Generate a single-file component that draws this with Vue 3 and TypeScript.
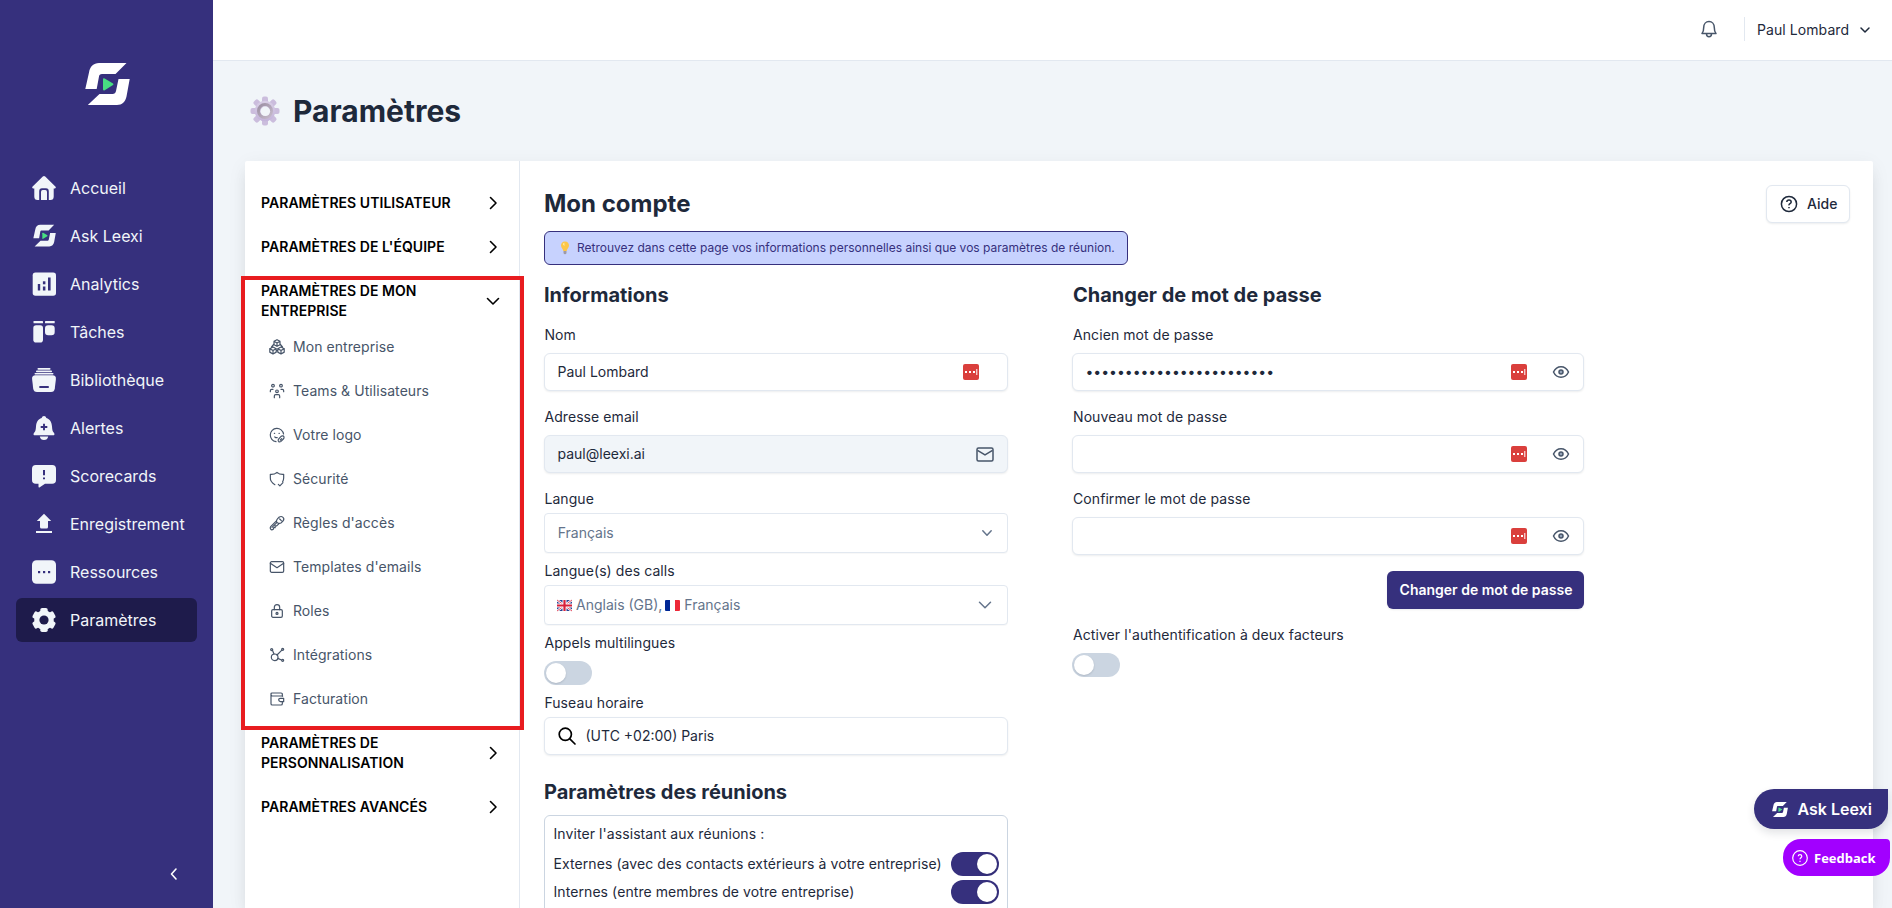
<script setup lang="ts">
import { ref } from 'vue'

interface NavItem { label: string; icon: string; active?: boolean }
interface SubItem { label: string; icon: string }
interface Section { lines: string[]; open?: boolean; items?: SubItem[] }

const mark = (play: string) =>
  `<path fill="currentColor" d="M4 9.5C5 3.5 8.500 0 14 0H41.500L30.500 11H17C15 11 14.200 12 14 13.500L11.700 26H0.300Z"/>` +
  `<path fill="currentColor" d="M33.500 16H44.700L41.500 33.500C40.500 38.500 37 42 32 42H2.800L14.500 31H27.500C29.500 31 30.600 30 31 28Z"/>` +
  `<path fill="${play}" d="M18 16.500Q18 14.700 19.700 15.600L28 20.400Q29 21.200 28 22L19.700 27.200Q18 28 18 26.300Z"/>`

const leexi = mark('#48df82')
const bg = '#36307d'
const tooth = [0, 60, 120, 180, 240, 300]
  .map(a => `<rect x="8.300" y="0" width="7.400" height="7" rx="1.800" transform="rotate(${a} 12 12)"/>`)
  .join('')

const icons: Record<string, string> = {
  home: `<path fill="currentColor" d="M10.800.6Q12-.5 13.200.6L23.600 10.700Q24.400 12 23 12.500H21.700V20.500Q21.700 24 18.500 24H16.800V15.600Q16.800 12.300 14 12.300H10Q7.200 12.300 7.200 15.600V24H5.500Q2.300 24 2.300 20.500V12.500H1Q-.4 12 .4 10.700Z"/><path fill="currentColor" d="M9 24V15.800Q9 14 10.700 14H13.300Q15 14 15 15.800V24Z"/>`,
  leexi: `<g transform="translate(1.200 .8) scale(.505 .515)">${leexi}</g>`,
  analytics: `<rect x=".7" y=".5" width="23.300" height="23.300" rx="2.800" fill="currentColor"/><g fill="${bg}"><rect x="5.800" y="12" width="2.400" height="6.500"/><rect x="10.900" y="9.300" width="2.500" height="3"/><rect x="10.900" y="14.500" width="2.500" height="4"/><rect x="16" y="5.500" width="2.600" height="13"/></g>`,
  tasks: `<g fill="currentColor"><rect x="1.500" y="1" width="9.500" height="2.300" rx=".6"/><rect x="13" y="1" width="9.700" height="2.300" rx=".6"/><rect x="1.300" y="5.300" width="9.700" height="17.200" rx="2.800"/><rect x="13" y="5.300" width="9.700" height="10" rx="3.200"/></g>`,
  library: `<g fill="currentColor"><rect x="5.500" y="0" width="13" height="1.700" rx=".8"/><rect x="4" y="2.500" width="16" height="1.700" rx=".8"/><rect x="2.500" y="5" width="19" height="1.500" rx=".7"/><path d="M3.500 7.300H20.500Q24.200 7.300 23.900 11L22.800 20.500Q22.300 24 19 24H5Q1.700 24 1.200 20.500L.1 11Q-.2 7.300 3.500 7.300Z"/></g><rect x="7.300" y="18" width="9.500" height="2" rx=".5" fill="${bg}"/>`,
  alert: `<path fill="currentColor" d="M12 0C13.200 0 14 .8 14.300 2C18 3.200 19.700 6.300 20 10.500C20.200 13.500 20.500 15.300 21.700 16.500C22.900 17.700 22.600 19.200 21.700 19.200H2.300C1.400 19.200 1.100 17.700 2.300 16.500C3.500 15.300 3.800 13.500 4 10.500C4.300 6.300 6 3.200 9.700 2C10 .8 10.800 0 12 0ZM7.800 20.500H16.200Q15.500 24 12 24T7.800 20.500Z"/><path d="M12 7.700V14.300M8.700 11H15.300" stroke="${bg}" stroke-width="1.900"/>`,
  score: `<path fill="currentColor" d="M3.800 1H20.200Q24 1 24 4.800V16Q24 19.800 20.200 19.800H13L7.800 23.200Q6.500 24 6.500 22.500V19.800H3.800Q0 19.800 0 16V4.800Q0 1 3.800 1Z"/><path d="M12 6V11.200M12 13.400V15.200" stroke="${bg}" stroke-width="2"/>`,
  upload: `<path fill="currentColor" d="M12 1.700 19.200 9H16V15Q16 16.500 14.500 16.500H9.500Q8 16.500 8 15V9H4.800ZM4 19H20V21H4Z"/>`,
  dots: `<rect width="24" height="23.500" x="0" y=".3" rx="4.500" fill="currentColor"/><g fill="${bg}"><rect x="6" y="11" width="2.200" height="2.200"/><rect x="11" y="11" width="2.200" height="2.200"/><rect x="16" y="11" width="2.200" height="2.200"/></g>`,
  gear: `<g fill="currentColor"><circle cx="12" cy="12" r="9.800"/>${tooth}</g><circle cx="12" cy="12" r="4.600" fill="#1e1b4b"/>`,
  boxes: `<path d="M12 1 16.500 3.500V8.500L12 11 7.500 8.500V3.500ZM7.500 3.500 12 6 16.500 3.500M12 6V11M6 12 10.800 14.500V19.700L6 22.500 1.200 19.700V14.500ZM1.200 14.500 6 17.200 10.800 14.500M6 17.200V22.500M18 12 22.800 14.500V19.700L18 22.500 13.200 19.700V14.500ZM13.200 14.500 18 17.200 22.800 14.500M18 17.200V22.500M7.500 7.500 3.800 12M16.500 7.500 20.200 12M10.800 17.500H13.200"/>`,
  team: `<circle cx="6" cy="4" r="2"/><circle cx="18" cy="4" r="2"/><circle cx="12" cy="12.500" r="2"/><path d="M2 13V11.500Q2 9.500 4 9.500H6M22 13V11.500Q22 9.500 20 9.500H18M8 22V19.500Q8 17.300 10 17.300H14Q16 17.300 16 19.500V22"/>`,
  face: `<path d="M21.800 10.500A10 10 0 1 0 10.500 22M8 9.500H8.500M15 9.500H15.500M8.700 15Q10 16.300 12.300 16M20 13.200Q22 13 22.500 14.700Q23 16.500 21.500 18L18 21.500Q16.500 22.800 14.800 22.300T14 18.700L17.700 14.500Q18.700 13.200 20 13.200M17 19.500 19 17.500"/>`,
  shield: `<path d="M8.800 20.500Q1.500 16 2 10V5Q8 5.500 12 2Q16 5.500 22 5V10Q22 13.500 20.500 16M14 20 16.300 22.300 21 17.500"/>`,
  key: `<path d="M13 5.500 15.500 3Q18.500 1.300 21 3.500T21 9L18.500 11.500Q15.500 13.500 12.500 11.500T13 5.500ZM16 6 18.500 8.500M11.500 8.500 2.500 17.500Q1 19.500 2.500 21.300T6.500 21.300L7 19H9.200V16.300H11.500L15.500 12.500M4.500 18.500 12 11"/>`,
  mail: `<rect x="2" y="4" width="20" height="16" rx="2"/><path d="M2 6.500 12 13 22 6.500"/>`,
  lock: `<rect x="4" y="10" width="16" height="11.500" rx="2"/><path d="M8 10V6.500Q8 2.500 12 2.500T16 6.500V10"/><circle cx="12" cy="15.700" r="1.500"/>`,
  link: `<circle cx="8.500" cy="15.500" r="5"/><circle cx="20.500" cy="3.500" r="1.500"/><circle cx="4" cy="4" r="1.500"/><circle cx="20.500" cy="20" r="1.500"/><path d="M12 12 19.300 4.700M5.300 5.300 7.500 10.500M13.300 17 18.700 19.500"/>`,
  wallet: `<path d="M20 8V5Q20 3 18 3H4.500Q3 3 3 4.500V19Q3 21 5 21H18Q20 21 20 19V16.500M3 5Q3 7.500 5 7.500H20.500M22 11H17Q14.500 11 14.500 13.300T17 16H22Z"/>`,
}

const nav: NavItem[] = [
  { label: 'Accueil', icon: 'home' },
  { label: 'Ask Leexi', icon: 'leexi' },
  { label: 'Analytics', icon: 'analytics' },
  { label: 'Tâches', icon: 'tasks' },
  { label: 'Bibliothèque', icon: 'library' },
  { label: 'Alertes', icon: 'alert' },
  { label: 'Scorecards', icon: 'score' },
  { label: 'Enregistrement', icon: 'upload' },
  { label: 'Ressources', icon: 'dots' },
  { label: 'Paramètres', icon: 'gear', active: true },
]

const sections: Section[] = [
  { lines: ['PARAMÈTRES UTILISATEUR'] },
  { lines: ["PARAMÈTRES DE L'ÉQUIPE"] },
  {
    lines: ['PARAMÈTRES DE MON', 'ENTREPRISE'],
    open: true,
    items: [
      { label: 'Mon entreprise', icon: 'boxes' },
      { label: 'Teams & Utilisateurs', icon: 'team' },
      { label: 'Votre logo', icon: 'face' },
      { label: 'Sécurité', icon: 'shield' },
      { label: "Règles d'accès", icon: 'key' },
      { label: "Templates d'emails", icon: 'mail' },
      { label: 'Roles', icon: 'lock' },
      { label: 'Intégrations', icon: 'link' },
      { label: 'Facturation', icon: 'wallet' },
    ],
  },
  { lines: ['PARAMÈTRES DE', 'PERSONNALISATION'] },
  { lines: ['PARAMÈTRES AVANCÉS'] },
]

const passwords = [
  { label: 'Ancien mot de passe', value: '•'.repeat(24) },
  { label: 'Nouveau mot de passe', value: '' },
  { label: 'Confirmer le mot de passe', value: '' },
]

const multilingual = ref(false)
const twoFactor = ref(false)
const meetings = ref([
  { label: 'Externes (avec des contacts extérieurs à votre entreprise)', on: true },
  { label: 'Internes (entre membres de votre entreprise)', on: true },
])
</script>

<template>
  <div class="app">
    <aside class="sidebar">
      <svg class="logo" viewBox="0 0 45 42" v-html="leexi" />
      <nav class="nav">
        <a v-for="n in nav" :key="n.label" class="nav-item" :class="{ active: n.active }">
          <svg viewBox="0 0 24 24" width="24" height="24" v-html="icons[n.icon]" />
          <span>{{ n.label }}</span>
        </a>
      </nav>
      <svg class="collapse" viewBox="0 0 12 16" width="12" height="16"><path d="M8 3 3.500 8 8 13" /></svg>
    </aside>

    <div class="page">
      <header class="topbar">
        <svg class="bell" viewBox="0 0 16 18" width="16" height="18">
          <path d="M1 13.500C2.500 12 2.700 10.500 2.700 7.500C2.700 4 5 1.500 8 1.500S13.300 4 13.300 7.500C13.300 10.500 13.500 12 15 13.500ZM5.500 13.700Q5.500 16.700 8 16.700T10.500 13.700" />
        </svg>
        <div class="divider" />
        <span class="user">Paul Lombard</span>
        <svg class="user-chev" viewBox="0 0 12 12" width="12" height="12"><path d="M2 4 6 8 10 4" /></svg>
      </header>

      <main class="content">
        <div class="title">
          <svg viewBox="0 0 30 30" width="30" height="30">
            <defs>
              <linearGradient id="cog" x1="0" y1="0" x2="0" y2="1">
                <stop offset="0" stop-color="#d9cfe6" /><stop offset="1" stop-color="#c3b3da" />
              </linearGradient>
              <linearGradient id="hub" x1="0" y1="0" x2="1" y2="1">
                <stop offset="0" stop-color="#9c90a3" /><stop offset="1" stop-color="#c6bacb" />
              </linearGradient>
            </defs>
            <rect v-for="a in 8" :key="a" x="12" y=".5" width="6" height="9" rx="2" fill="#cbbddd" :transform="`rotate(${a * 45} 15 15)`" />
            <circle cx="15" cy="15" r="10.300" fill="url(#cog)" />
            <circle cx="15" cy="15" r="6.500" fill="none" stroke="url(#hub)" stroke-width="3" />
            <circle cx="15.300" cy="15.300" r="4.800" fill="#f1f5f9" />
          </svg>
          <h1>Paramètres</h1>
        </div>

        <div class="card">
          <div class="menu">
            <div v-for="s in sections" :key="s.lines[0]" class="section" :class="{ open: s.open }">
              <div class="section-head" :class="{ two: s.lines.length > 1 }">
                <div><div v-for="l in s.lines" :key="l">{{ l }}</div></div>
                <svg viewBox="0 0 16 16" width="16" height="16"><path :d="s.open ? 'M2.500 5.500 8 11 13.500 5.500' : 'M5.500 2.500 11 8 5.500 13.500'" /></svg>
              </div>
              <a v-for="i in s.items" :key="i.label" class="sub">
                <svg viewBox="0 0 24 24" width="16" height="16" v-html="icons[i.icon]" />
                <span>{{ i.label }}</span>
              </a>
              <div v-if="s.open" class="frame" />
            </div>
          </div>

          <div class="body">
            <div class="body-head">
              <h2>Mon compte</h2>
              <button class="help">
                <svg viewBox="0 0 18 18" width="18" height="18"><circle cx="9" cy="9" r="7.600" /><path d="M6.800 7Q6.900 5.100 9 5.100T11.200 7Q11.200 8 10 8.700T9 10.400M9 12.100V13.200" /></svg>
                <span>Aide</span>
              </button>
            </div>
            <div class="hint">
              <svg viewBox="0 0 12 14" width="12" height="14"><path fill="#fcc649" d="M6 .5C8.700.5 10 2.300 10 4.500C10 7 8 7.800 7.700 10H4.300C4 7.800 2 7 2 4.500C2 2.300 3.300.5 6 .5Z" /><path fill="#fff0a8" d="M4 3.500Q4 2 5.300 1.700L5.500 5Z" /><path fill="#9d9aa8" d="M4.500 10H7.500V12Q7.300 13.300 6 13.300T4.500 12Z" /></svg>
              <span>Retrouvez dans cette page vos informations personnelles ainsi que vos paramètres de réunion.</span>
            </div>

            <div class="columns">
              <section class="left">
                <h3>Informations</h3>
                <label>Nom</label>
                <div class="field">
                  <span class="value">Paul Lombard</span>
                  <svg class="pm name-pm" viewBox="0 0 16 16" width="16" height="16"><rect width="16" height="16" rx="2" fill="#da3f3c" /><path fill="#fff" d="M2 7h2v2H2zM6 7h2v2H6zM10 7h2v2h-2zM13.300 5h1v6h-1z" /></svg>
                </div>
                <label class="mt16">Adresse email</label>
                <div class="field disabled">
                  <span class="value">paul@leexi.ai</span>
                  <svg class="mail" viewBox="0 0 18 15" width="18" height="15"><rect x="1" y="1" width="16" height="13" rx="1.500" /><path d="M1.500 3.300 9 7.800 16.500 3.300" /></svg>
                </div>
                <label class="mt16 tight">Langue</label>
                <div class="select single">
                  <span class="value">Français</span>
                  <svg viewBox="0 0 14 14" width="14" height="14" class="small-chev"><path d="M2.800 4.800 7 9.200 11.200 4.800" /></svg>
                </div>
                <label class="mt8 tight">Langue(s) des calls</label>
                <div class="select">
                  <svg class="flag" viewBox="0 0 15 11" width="15" height="11"><rect width="15" height="11" rx="1" fill="#263f8f" /><path d="M0 0 15 11M15 0 0 11" stroke="#fff" stroke-width="2.200" /><path d="M0 0 15 11M15 0 0 11" stroke="#d8203a" stroke-width=".8" /><path d="M7.500 0V11M0 5.500H15" stroke="#fff" stroke-width="4" /><path d="M7.500 0V11M0 5.500H15" stroke="#d8203a" stroke-width="2.200" /></svg>
                  <span class="value lang">Anglais (GB),</span>
                  <svg class="flag fr" viewBox="0 0 15 11" width="15" height="11"><rect width="15" height="11" rx="1" fill="#fff" /><path fill="#002795" d="M1 0H5V11H1Q0 11 0 10V1Q0 0 1 0Z" /><path fill="#ed2939" d="M10 0H14Q15 0 15 1V10Q15 11 14 11H10Z" /></svg>
                  <span class="value">Français</span>
                  <svg viewBox="0 0 16 16" width="16" height="16" class="big-chev"><path d="M2.500 5.300 8 10.700 13.500 5.300" /></svg>
                </div>
                <label class="mt8">Appels multilingues</label>
                <button class="toggle" :class="{ on: multilingual }" @click="multilingual = !multilingual"><i /></button>
                <label class="mt8 tight">Fuseau horaire</label>
                <div class="field">
                  <svg class="search" viewBox="0 0 18 18" width="18" height="18"><circle cx="7.300" cy="7.300" r="6.100" /><path d="M11.800 11.800 17 17" /></svg>
                  <span class="value">(UTC +02:00) Paris</span>
                </div>
                <h3 class="meet-title">Paramètres des réunions</h3>
                <div class="meet">
                  <p>Inviter l'assistant aux réunions :</p>
                  <div v-for="m in meetings" :key="m.label" class="meet-row">
                    <span>{{ m.label }}</span>
                    <button class="toggle" :class="{ on: m.on }" @click="m.on = !m.on"><i /></button>
                  </div>
                </div>
              </section>

              <section class="right">
                <h3>Changer de mot de passe</h3>
                <div v-for="p in passwords" :key="p.label" class="pw">
                  <label>{{ p.label }}</label>
                  <div class="field">
                    <span class="dots">{{ p.value }}</span>
                    <svg class="pm" viewBox="0 0 16 16" width="16" height="16"><rect width="16" height="16" rx="2" fill="#da3f3c" /><path fill="#fff" d="M2 7h2v2H2zM6 7h2v2H6zM10 7h2v2h-2zM13.300 5h1v6h-1z" /></svg>
                    <svg class="eye" viewBox="0 0 18 14" width="18" height="14"><path d="M1.500 7Q4 1.700 9 1.700T16.500 7Q14 12.300 9 12.300T1.500 7Z" /><circle cx="9" cy="7" r="2" /></svg>
                  </div>
                </div>
                <button class="primary">Changer de mot de passe</button>
                <label class="twofa">Activer l'authentification à deux facteurs</label>
                <button class="toggle two-toggle" :class="{ on: twoFactor }" @click="twoFactor = !twoFactor"><i /></button>
              </section>
            </div>
          </div>
        </div>
      </main>
    </div>

    <div class="ask">
      <svg viewBox="0 0 45 42" width="16" height="15" v-html="leexi" />
      <span>Ask Leexi</span>
    </div>
    <div class="feedback">
      <svg viewBox="0 0 16 16" width="16" height="16"><circle cx="8" cy="8" r="7.300" /><path d="M6.200 6.300Q6.300 4.700 8 4.700T9.800 6.300Q9.800 7 8.900 7.700T8 9.300M8 10.700V11.900" /></svg>
      <span>Feedback</span>
    </div>
  </div>
</template>

<style>
body { margin: 0; overflow: hidden; }
</style>

<style scoped>
* { box-sizing: border-box; }
.app {
  position: relative;
  display: flex;
  width: 100%;
  height: 908px;
  overflow: hidden;
  background: #f1f5f9;
  color: #1e293b;
  font: 400 14px/20px Inter, sans-serif;
}
svg { display: block; flex: none; overflow: visible; }
h1, h2, h3, p { margin: 0; }
h1, h2, h3 { font-weight: 650; }
button { font: inherit; border: 0; padding: 0; }

.sidebar {
  width: 213px;
  flex: none;
  background: #36307d;
  color: #f1f5f9;
  display: flex;
  flex-direction: column;
  padding: 63px 16px 26px;
}
.logo { width: 45px; height: 42px; margin-left: 69px; color: #fff; }
.nav { margin-top: 61px; display: flex; flex-direction: column; gap: 4px; flex: 1; }
.nav-item {
  display: flex;
  align-items: center;
  gap: 14px;
  height: 44px;
  padding-left: 16px;
  border-radius: 6px;
  font-size: 16px;
  line-height: 24px;
}
.nav-item.active { background: #1e1b4b; }
.collapse { align-self: flex-end; margin-right: 17px; fill: none; stroke: #fff; stroke-width: 1.6; stroke-linecap: round; stroke-linejoin: round; }

.page { flex: 1; display: flex; flex-direction: column; min-width: 0; }
.topbar {
  height: 61px;
  flex: none;
  background: #fff;
  border-bottom: 1px solid #e2e8f0;
  display: flex;
  align-items: center;
  justify-content: flex-end;
  padding-right: 21px;
}
.bell { margin-right: 27px; margin-top: -2px; fill: none; stroke: #475569; stroke-width: 1.5; stroke-linejoin: round; }
.divider { width: 1px; height: 24px; background: #e2e8f0; margin: -2px 12px 0 0; }
.user { width: 92px; white-space: nowrap; letter-spacing: .08px; }
.user-chev { margin-left: 10px; fill: none; stroke: #1e293b; stroke-width: 1.5; stroke-linecap: round; stroke-linejoin: round; }

.content { flex: 1; display: flex; flex-direction: column; padding: 32px 19px 0 32px; min-height: 0; }
.title { display: flex; align-items: center; gap: 13px; height: 36px; padding-left: 5px; }
h1 { font-size: 30px; line-height: 36px; }
.card {
  flex: 1;
  min-height: 0;
  display: flex;
  margin-top: 32px;
  background: #fff;
  border-radius: 2px 2px 0 0;
  box-shadow: 0 10px 15px -3px rgba(15, 23, 42, .08), 0 4px 20px rgba(15, 23, 42, .06);
}
.menu { width: 275px; flex: none; border-right: 1px solid #e2e8f0; padding-top: 20px; }
.section { position: relative; }
.section-head {
  display: flex;
  justify-content: space-between;
  align-items: center;
  height: 44px;
  padding: 0 18px 0 16px;
  color: #000;
  font-weight: 600;
  letter-spacing: .05px;
}
.section-head.two { height: 64px; }
.section-head svg { fill: none; stroke: #000; stroke-width: 1.6; stroke-linecap: round; stroke-linejoin: round; }
.sub { display: flex; align-items: center; gap: 8px; height: 44px; padding-left: 24px; color: #475569; letter-spacing: .07px; }
.section.open .section-head + .sub { margin-top: -8px; }
.sub svg { fill: none; stroke: #475569; stroke-width: 1.8; stroke-linecap: round; stroke-linejoin: round; }
.frame {
  position: absolute;
  left: -4px;
  top: 7px;
  width: 283px;
  height: 454px;
  border: 4px solid #e81c1f;
  pointer-events: none;
}

.body { flex: 1; padding: 24px 23px 0 24px; min-width: 0; }
.body-head { display: flex; justify-content: space-between; align-items: center; height: 38px; }
h2 { font-size: 24px; line-height: 32px; }
.help {
  display: flex;
  align-items: center;
  gap: 9px;
  width: 84px;
  height: 38px;
  padding: 0 0 0 13px;
  background: #fff;
  border: 1px solid #e2e8f0;
  border-radius: 6px;
  box-shadow: 0 1px 2px rgba(15, 23, 42, .08);
  color: #1e293b;
  font-weight: 500;
}
.help svg { fill: none; stroke: #1e293b; stroke-width: 1.5; }
.hint {
  display: flex;
  align-items: center;
  gap: 6px;
  width: 584px;
  height: 34px;
  margin-top: 8px;
  padding-left: 14px;
  background: #c7d2fe;
  border: 1px solid #36307d;
  border-radius: 6px;
  color: #36307d;
  font-size: 12px;
  line-height: 16px;
  white-space: nowrap;
}
.columns { display: flex; gap: 64px; margin-top: 16px; }
.left { width: 464px; }
.right { width: 512px; }
h3 { font-size: 20px; line-height: 28px; margin-bottom: 16px; }
.right h3, .right label { padding-left: 1px; }
label { display: block; margin-bottom: 8px; line-height: 20px; letter-spacing: .08px; padding-left: .4px; }
.mt16 { margin-top: 16px; }
.mt8 { margin-top: 8px; }
.tight { margin-bottom: 4px; }
.field, .select {
  display: flex;
  align-items: center;
  height: 38px;
  padding-left: 12.500px;
  background: #fff;
  border: 1px solid #e2e8f0;
  border-radius: 6px;
  box-shadow: 0 1px 2px rgba(15, 23, 42, .08);
}
.select { height: 40px; border-radius: 4px; color: #64748b; box-shadow: 0 1px 1px rgba(15, 23, 42, .03); padding-left: 12px; }
.select.single { padding-left: 12.700px; }
.disabled { background: #f1f5f9; }
.name-pm { margin-left: auto; margin-right: 28px; }
.mail { margin-left: auto; margin-right: 13px; fill: none; stroke: #475569; stroke-width: 1.5; }
.small-chev, .big-chev { margin-left: auto; fill: none; stroke: #64748b; stroke-width: 1.5; stroke-linecap: round; stroke-linejoin: round; }
.small-chev { margin-right: 13px; }
.big-chev { margin-right: 14px; }
.flag { margin-right: 4px; }
.flag.fr { margin-left: 3px; }
.search { margin-right: 10px; fill: none; stroke: #000; stroke-width: 1.7; stroke-linecap: round; }
.toggle { display: block; width: 48px; height: 24px; border-radius: 12px; background: #cbd5e1; padding: 2px; flex: none; }
.toggle i { display: block; width: 20px; height: 20px; border-radius: 50%; background: #fff; box-shadow: 0 1px 2px rgba(15, 23, 42, .15); }
.toggle.on { background: #36307d; }
.toggle.on i { margin-left: 24px; }
.meet-title { margin: 23px 0 9px; }
.meet { height: 140px; padding: 8px 8px 0 8.500px; border: 1px solid #cbd5e1; border-radius: 6px; letter-spacing: .08px; }
.meet p { margin-bottom: 8px; }
.meet-row { display: flex; justify-content: space-between; align-items: center; height: 24px; margin-bottom: 4px; white-space: nowrap; }
.pw { margin-bottom: 16px; }
.dots { flex: 1; letter-spacing: -.02px; }
.right .pm { margin-right: 25px; }
.eye { margin-right: 13px; fill: none; stroke: #475569; stroke-width: 1.5; }
.eye circle { fill: #94a3b8; }
.primary {
  display: block;
  width: 197px;
  height: 38px;
  margin: 0 0 0 auto;
  padding-left: 1px;
  background: #36307d;
  border-radius: 6px;
  box-shadow: 0 1px 2px rgba(15, 23, 42, .08);
  color: #fff;
  font-weight: 600;
}
.twofa { margin-top: 16px; }

.ask, .feedback { position: absolute; display: flex; align-items: center; color: #fff; white-space: nowrap; }
.ask {
  left: 1754px;
  top: 789px;
  width: 134px;
  height: 40px;
  padding-left: 18px;
  gap: 9.500px;
  background: #36307d;
  border-radius: 20px 0 20px 20px;
  box-shadow: 0 4px 8px rgba(15, 23, 42, .12);
  font-size: 16px;
  font-weight: 600;
}
.feedback {
  left: 1783px;
  top: 839px;
  width: 107px;
  height: 37px;
  padding-left: 9px;
  gap: 6px;
  background: #a200ff;
  border-radius: 18px 4px 18px 18px;
  font: 700 13px/18px "Open Sans", sans-serif;
}
.feedback svg { fill: none; stroke: #fff; stroke-width: 1.2; }
</style>
